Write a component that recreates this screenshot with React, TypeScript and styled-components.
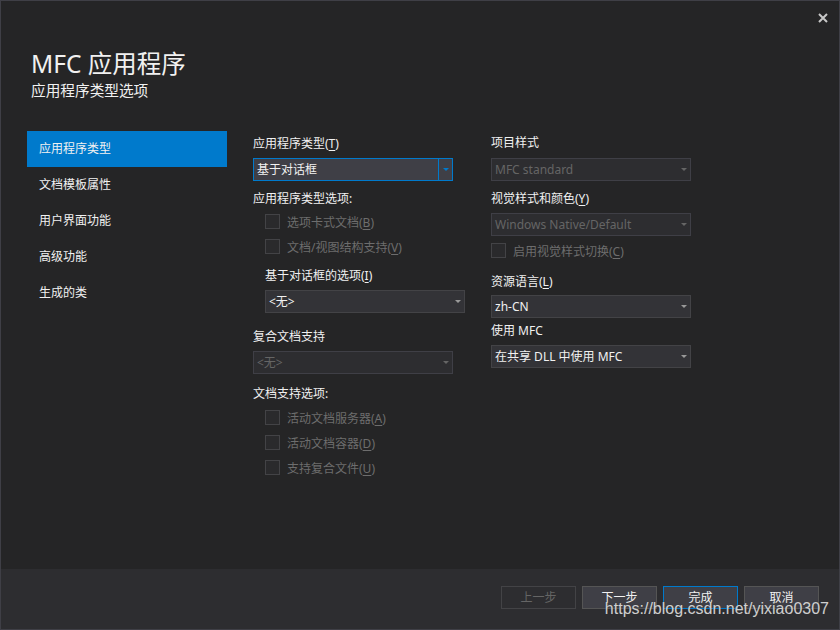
import React from "react";
import styled, { createGlobalStyle, css } from "styled-components";

const GlobalStyle = createGlobalStyle`
  html, body {
    margin: 0;
    padding: 0;
    background: #252526;
  }
`;

const Window = styled.div`
  position: relative;
  width: 840px;
  height: 630px;
  box-sizing: border-box;
  border: 1px solid #3f3f46;
  background: #252526;
  display: flex;
  flex-direction: column;
  font-family: "Noto Sans", "Noto Sans CJK SC", sans-serif;
  font-size: 12px;
  color: #f1f1f1;
  overflow: hidden;
`;

const TopBar = styled.div`
  height: 34px;
  display: flex;
  justify-content: flex-end;
  align-items: center;
  padding-right: 11px;
`;

const CloseButton = styled.div`
  width: 10px;
  height: 10px;
  display: flex;
  cursor: pointer;
`;

const Header = styled.div`
  padding-left: 30px;
  margin-top: 14px;
`;

const Title = styled.div`
  font-size: 24.5px;
  line-height: 30px;
  height: 30px;
  color: #f1f1f1;
`;

const Subtitle = styled.div`
  margin-top: 2px;
  font-size: 14.67px;
  line-height: 18px;
  height: 18px;
  color: #f1f1f1;
`;

const Body = styled.div`
  flex: 1;
  display: flex;
  gap: 26px;
  padding-left: 26px;
  margin-top: 31px;
`;

const Nav = styled.div`
  width: 200px;
  padding-top: 1px;
  display: flex;
  flex-direction: column;
`;

const NavItem = styled.div<{ $active?: boolean }>`
  height: 36px;
  line-height: 36px;
  padding-left: 12px;
  color: #f1f1f1;
  background: ${(p) => (p.$active ? "#007acc" : "transparent")};
`;

const Column = styled.div<{ $pt: number; $w: number }>`
  width: ${(p) => p.$w}px;
  padding-top: ${(p) => p.$pt}px;
  display: flex;
  flex-direction: column;
  align-items: flex-start;
`;

const FieldLabel = styled.div<{ $mt?: number; $indent?: number }>`
  height: 16px;
  line-height: 16px;
  white-space: nowrap;
  margin-top: ${(p) => p.$mt ?? 0}px;
  margin-left: ${(p) => p.$indent ?? 0}px;
`;

const Key = styled.span`
  text-decoration: underline;
  text-underline-offset: 2px;
`;

type SelectState = "focused" | "normal" | "disabled";

const SelectBox = styled.div<{ $mt?: number; $indent?: number; $state: SelectState }>`
  box-sizing: border-box;
  width: 200px;
  height: 23px;
  margin-top: ${(p) => p.$mt ?? 0}px;
  margin-left: ${(p) => p.$indent ?? 0}px;
  display: flex;
  align-items: stretch;
  ${(p) =>
    p.$state === "focused"
      ? css`
          border: 1px solid #007acc;
          background: #3f3f46;
          color: #f1f1f1;
        `
      : p.$state === "normal"
      ? css`
          border: 1px solid #434346;
          background: #333337;
          color: #f1f1f1;
        `
      : css`
          border: 1px solid #3f3f46;
          background: #2d2d30;
          color: #656565;
        `}
`;

const SelectText = styled.div`
  flex: 1;
  padding-left: 3px;
  line-height: 21px;
  white-space: nowrap;
`;

const ArrowBox = styled.div<{ $state: SelectState }>`
  width: 13px;
  display: flex;
  align-items: center;
  justify-content: center;
  border-left: 1px solid ${(p) => (p.$state === "focused" ? "#007acc" : "transparent")};
  &::after {
    content: "";
    width: 0;
    height: 0;
    border-left: 3px solid transparent;
    border-right: 3px solid transparent;
    border-top: 3px solid
      ${(p) => (p.$state === "focused" ? "#007acc" : p.$state === "normal" ? "#999999" : "#656565")};
  }
`;

const CheckRow = styled.div<{ $mt?: number; $indent?: number }>`
  display: flex;
  align-items: center;
  gap: 7px;
  height: 15px;
  margin-top: ${(p) => p.$mt ?? 0}px;
  margin-left: ${(p) => p.$indent ?? 0}px;
`;

const CheckBox = styled.div`
  box-sizing: border-box;
  width: 15px;
  height: 15px;
  border: 1px solid #434346;
  background: #2a2a2c;
`;

const CheckText = styled.span`
  color: #6d6d6d;
  line-height: 15px;
  padding-top: 1px;
  white-space: nowrap;
`;

const Footer = styled.div`
  height: 60px;
  flex-shrink: 0;
  background: #2d2d30;
  display: flex;
  justify-content: flex-end;
  align-items: flex-start;
  gap: 6px;
  padding: 17px 20px 0 0;
  box-sizing: border-box;
`;

const Button = styled.div<{ $variant?: "default" | "primary" | "disabled" }>`
  box-sizing: border-box;
  width: 75px;
  height: 23px;
  line-height: 21px;
  text-align: center;
  ${(p) =>
    p.$variant === "disabled"
      ? css`
          border: 1px solid #434346;
          background: transparent;
          color: #656565;
        `
      : css`
          border: 1px solid ${p.$variant === "primary" ? "#007acc" : "#555555"};
          background: #3f3f46;
          color: #f1f1f1;
        `}
`;

const Watermark = styled.div`
  position: absolute;
  right: 10px;
  bottom: 10px;
  font-family: "Liberation Sans", Arial, sans-serif;
  font-size: 16px;
  line-height: 20px;
  color: rgba(235, 235, 235, 0.85);
  text-shadow: 0 0 1px rgba(60, 60, 60, 0.9);
  pointer-events: none;
`;

const Select = ({
  value,
  state = "normal",
  mt,
  indent,
}: {
  value: string;
  state?: SelectState;
  mt?: number;
  indent?: number;
}) => (
  <SelectBox $state={state} $mt={mt} $indent={indent}>
    <SelectText>{value}</SelectText>
    <ArrowBox $state={state} />
  </SelectBox>
);

const Check = ({ children, mt, indent }: { children: React.ReactNode; mt?: number; indent?: number }) => (
  <CheckRow $mt={mt} $indent={indent}>
    <CheckBox />
    <CheckText>{children}</CheckText>
  </CheckRow>
);

const navItems = ["应用程序类型", "文档模板属性", "用户界面功能", "高级功能", "生成的类"];

export default function App() {
  return (
    <>
      <GlobalStyle />
      <Window>
        <TopBar>
          <CloseButton>
            <svg width="10" height="10" viewBox="0 0 10 10">
              <path d="M1 1 L9 9 M9 1 L1 9" stroke="#c8c8c8" strokeWidth="2" />
            </svg>
          </CloseButton>
        </TopBar>
        <Header>
          <Title>MFC 应用程序</Title>
          <Subtitle>应用程序类型选项</Subtitle>
        </Header>
        <Body>
          <Nav>
            {navItems.map((item, i) => (
              <NavItem key={item} $active={i === 0}>
                {item}
              </NavItem>
            ))}
          </Nav>
          <Column $pt={6} $w={212}>
            <FieldLabel>
              应用程序类型(<Key>T</Key>)
            </FieldLabel>
            <Select mt={6} value="基于对话框" state="focused" />
            <FieldLabel $mt={10}>应用程序类型选项:</FieldLabel>
            <Check mt={7} indent={12}>
              选项卡式文档(<Key>B</Key>)
            </Check>
            <Check mt={10} indent={12}>
              文档/视图结构支持(<Key>V</Key>)
            </Check>
            <FieldLabel $mt={14} $indent={12}>
              基于对话框的选项(<Key>I</Key>)
            </FieldLabel>
            <Select mt={6} indent={12} value="<无>" />
            <FieldLabel $mt={16}>复合文档支持</FieldLabel>
            <Select mt={6} value="<无>" state="disabled" />
            <FieldLabel $mt={12}>文档支持选项:</FieldLabel>
            <Check mt={8} indent={12}>
              活动文档服务器(<Key>A</Key>)
            </Check>
            <Check mt={10} indent={12}>
              活动文档容器(<Key>D</Key>)
            </Check>
            <Check mt={10} indent={12}>
              支持复合文件(<Key>U</Key>)
            </Check>
          </Column>
          <Column $pt={5} $w={220}>
            <FieldLabel>项目样式</FieldLabel>
            <Select mt={7} value="MFC standard" state="disabled" />
            <FieldLabel $mt={10}>
              视觉样式和颜色(<Key>Y</Key>)
            </FieldLabel>
            <Select mt={6} value="Windows Native/Default" state="disabled" />
            <Check mt={7}>
              启用视觉样式切换(<Key>C</Key>)
            </Check>
            <FieldLabel $mt={16}>
              资源语言(<Key>L</Key>)
            </FieldLabel>
            <Select mt={5} value="zh-CN" />
            <FieldLabel $mt={5}>使用 MFC</FieldLabel>
            <Select mt={6} value="在共享 DLL 中使用 MFC" />
          </Column>
        </Body>
        <Footer>
          <Button $variant="disabled">上一步</Button>
          <Button>下一步</Button>
          <Button $variant="primary">完成</Button>
          <Button>取消</Button>
        </Footer>
        <Watermark>https://blog.csdn.net/yixiao0307</Watermark>
      </Window>
    </>
  );
}
